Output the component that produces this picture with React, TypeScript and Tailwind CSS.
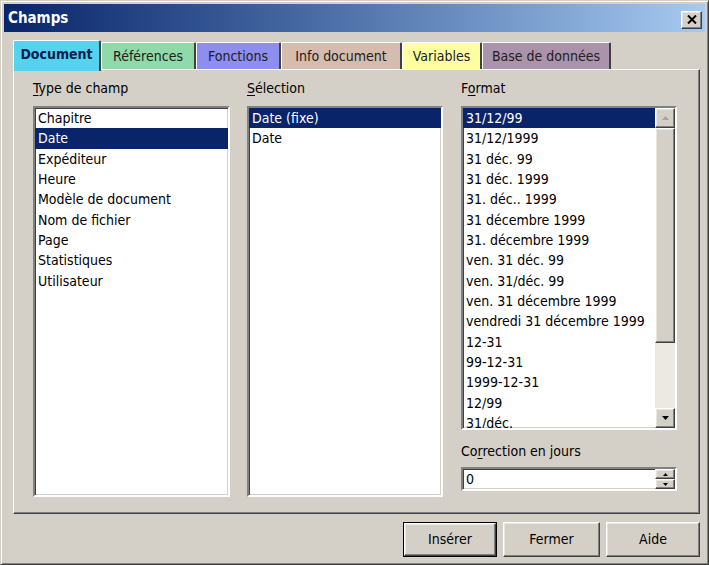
import React from "react";

const typeItems = ["Chapitre", "Date", "Expéditeur", "Heure", "Modèle de document", "Nom de fichier", "Page", "Statistiques", "Utilisateur"];
const selItems = ["Date (fixe)", "Date"];
const formatItems = [
  "31/12/99",
  "31/12/1999",
  "31 déc. 99",
  "31 déc. 1999",
  "31. déc.. 1999",
  "31 décembre 1999",
  "31. décembre 1999",
  "ven. 31 déc. 99",
  "ven. 31/déc. 99",
  "ven. 31 décembre 1999",
  "vendredi 31 décembre 1999",
  "12-31",
  "99-12-31",
  "1999-12-31",
  "12/99",
  "31/déc.",
];

function Label({ text, u }: { text: string; u: number }) {
  return (
    <div className="h-[18px] leading-[18px] whitespace-pre">
      {text.slice(0, u)}
      <span className="underline underline-offset-2">{text[u]}</span>
      {text.slice(u + 1)}
    </div>
  );
}

function ListRows({ items, selected }: { items: string[]; selected: number }) {
  return (
    <div className="flex flex-col">
      {items.map((t, i) => (
        <div
          key={t + i}
          className={
            "h-[20.33px] leading-[20.33px] pl-[3px] whitespace-nowrap " +
            (i === selected ? "bg-[#0a246a] text-white" : "text-black")
          }
        >
          {t}
        </div>
      ))}
    </div>
  );
}

const sunken =
  "border-2 border-t-[#808080] border-l-[#808080] border-r-white border-b-white shadow-[inset_1px_1px_0_#404040,inset_-1px_-1px_0_#d4d0c8] bg-white";
const raised =
  "border border-t-white border-l-white border-r-[#404040] border-b-[#404040] shadow-[inset_-1px_-1px_0_#808080,inset_1px_1px_0_#e8e6e0] bg-[#d4d0c8]";

function Arrow({ dir, color = "#000", size = 4 }: { dir: "up" | "down"; color?: string; size?: number }) {
  const w = size * 2 - 1;
  return (
    <svg width={w} height={size} viewBox={`0 0 ${w} ${size}`}>
      {dir === "down" ? (
        <polygon points={`0,0 ${w},0 ${w / 2},${size}`} fill={color} />
      ) : (
        <polygon points={`0,${size} ${w},${size} ${w / 2},0`} fill={color} />
      )}
    </svg>
  );
}

const tabs = [
  { label: "Document", w: 88, bg: "bg-[#55d2ee]", active: true },
  { label: "Références", w: 95, bg: "bg-[#8fdaa8]" },
  { label: "Fonctions", w: 85, bg: "bg-[#8e8ef0]" },
  { label: "Info document", w: 121, bg: "bg-[#d6bcae]" },
  { label: "Variables", w: 80, bg: "bg-[#ffffa2]" },
  { label: "Base de données", w: 129, bg: "bg-[#ab93ab]" },
];

export default function App() {
  return (
    <div className="w-[709px] h-[565px] bg-[#d4d0c8] font-['DejaVu_Sans_Condensed','DejaVu_Sans',sans-serif] text-[14px] text-black overflow-hidden">
      <div className="w-[709px] h-[565px] border border-t-[#d4d0c8] border-l-[#d4d0c8] border-r-[#404040] border-b-[#404040] shadow-[inset_1px_1px_0_#fff,inset_-1px_-1px_0_#808080] pt-[3px] px-[3px] flex flex-col">
        {/* Title bar */}
        <div className="h-[28px] bg-linear-to-r from-[#0a246a] to-[#a6caf0] flex items-center justify-between pl-[4px] pr-[3px]">
          <span className="text-white font-bold text-[15px] leading-none">Champs</span>
          <div className={raised + " w-[21px] h-[18px] mt-[3px] flex items-center justify-center"}>
            <svg width="10" height="9" viewBox="0 0 10 9">
              <path d="M1 0.5 L9 8.5 M9 0.5 L1 8.5" stroke="#000" strokeWidth="2" />
            </svg>
          </div>
        </div>

        {/* Tabs */}
        <div className="flex items-end pl-[9px] mt-[8px] h-[29px] relative z-10">
          {tabs.map((t) =>
            t.active ? (
              <div
                key={t.label}
                className={
                  t.bg +
                  " h-[31px] -mb-[2px] border-t border-l border-t-white border-l-white border-r-2 border-r-[#404040] rounded-t-[2px] flex items-center justify-center font-bold text-[14px] text-[#0a2050] pb-[4px]"
                }
                style={{ width: t.w }}
              >
                {t.label}
              </div>
            ) : (
              <div
                key={t.label}
                className={
                  t.bg +
                  " h-[27px] border-t border-l border-t-white border-l-white border-r-2 border-r-[#404040] rounded-t-[2px] flex items-center justify-center text-[#202020] pt-[1px]"
                }
                style={{ width: t.w }}
              >
                {t.label}
              </div>
            )
          )}
        </div>

        {/* Panel */}
        <div className="ml-[9px] w-[687px] h-[445px] border border-t-white border-l-white border-r-[#404040] border-b-[#404040] shadow-[inset_-1px_-1px_0_#808080] pt-[9px] pl-[19px] flex gap-[17px]">
          <div className="flex flex-col w-[197px]">
            <Label text="Type de champ" u={0} />
            <div className={sunken + " mt-[9px] h-[391px]"}>
              <ListRows items={typeItems} selected={1} />
            </div>
          </div>
          <div className="flex flex-col w-[196px]">
            <Label text="Sélection" u={0} />
            <div className={sunken + " mt-[9px] h-[391px]"}>
              <ListRows items={selItems} selected={0} />
            </div>
          </div>
          <div className="flex flex-col w-[216px] ml-[1px]">
            <Label text="Format" u={1} />
            <div className={sunken + " mt-[9px] h-[324px] flex"}>
              <div className="flex-1 overflow-hidden">
                <ListRows items={formatItems} selected={0} />
              </div>
              <div className="w-[20px] flex flex-col bg-[#ece9e2]">
                <div className={raised + " h-[20px] flex items-center justify-center"}>
                  <Arrow dir="up" color="#a8a49c" />
                </div>
                <div className={raised + " h-[215px]"} />
                <div className="flex-1" />
                <div className={raised + " h-[20px] flex items-center justify-center"}>
                  <Arrow dir="down" />
                </div>
              </div>
            </div>
            <div className="mt-[12px]">
              <Label text="Correction en jours" u={2} />
            </div>
            <div className={sunken + " mt-[7px] h-[24px] flex"}>
              <div className="flex-1 pl-[3px] leading-[20px]">0</div>
              <div className="w-[20px] flex flex-col">
                <div className={raised + " h-[10px] flex items-center justify-center"}>
                  <Arrow dir="up" size={3} />
                </div>
                <div className={raised + " h-[10px] flex items-center justify-center"}>
                  <Arrow dir="down" size={3} />
                </div>
              </div>
            </div>
          </div>
        </div>

        {/* Buttons */}
        <div className="flex justify-end gap-[6px] mt-[8px] pr-[5px]">
          <div className="w-[94px] h-[35px] border border-black">
            <div className={raised + " w-full h-full flex items-center justify-center"}>Insérer</div>
          </div>
          <div className={raised + " w-[97px] h-[35px] flex items-center justify-center"}>Fermer</div>
          <div className={raised + " w-[94px] h-[35px] flex items-center justify-center"}>Aide</div>
        </div>
      </div>
    </div>
  );
}
